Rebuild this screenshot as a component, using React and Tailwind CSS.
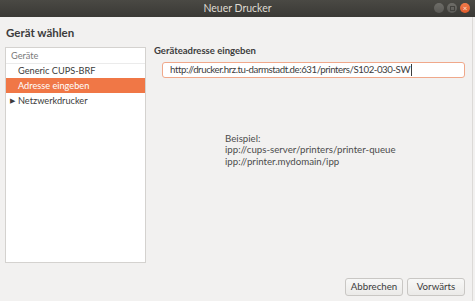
import React from "react";

export default function App() {
  return (
    <div
      className="w-[475px] h-[301px] bg-[#f2f1f0] flex flex-col overflow-hidden text-[#3c3c3c]"
      style={{ fontFamily: 'Lato, "Noto Sans", sans-serif' }}
    >
      {/* Title bar */}
      <div className="h-[17px] bg-gradient-to-b from-[#4a4944] to-[#3a3935] flex items-center relative shrink-0">
        <div className="flex-1 text-center text-[10.5px] text-[#dfdbd2] leading-none">Neuer Drucker</div>
        <div className="absolute right-[5px] top-[3px] flex gap-[3px]">
          <div className="w-[10px] h-[10px] rounded-full bg-gradient-to-b from-[#6e6d68] to-[#5a5955]" />
          <div className="w-[10px] h-[10px] rounded-full bg-gradient-to-b from-[#6e6d68] to-[#5a5955] flex items-center justify-center">
            <div className="w-[5px] h-[5px] border border-[#43423e]" />
          </div>
          <div className="w-[10px] h-[10px] rounded-full bg-gradient-to-b from-[#f37b4b] to-[#e05a2a] flex items-center justify-center text-[8px] leading-none text-[#fbe3d8]">×</div>
        </div>
      </div>

      <div className="flex-1 flex flex-col mr-[2px] border-r border-[#dcdad7]">
        <div className="px-[6px] pt-[10px] h-[30px] text-[11.5px] font-bold text-[#3c3c3c] leading-none">Gerät wählen</div>

        <div className="flex flex-1 px-[5px] gap-[8px]">
          {/* left list */}
          <div className="w-[141px] h-[216px] bg-white border border-[#d4d2cf] flex flex-col text-[9.2px] leading-none">
            <div className="h-[16px] flex items-center pl-[5px] text-[#7a7a7a] border-b border-[#ebebeb]">Geräte</div>
            <div className="h-[14px] flex items-center pl-[12px] text-[#3c3c3c]">Generic CUPS-BRF</div>
            <div className="h-[15px] flex items-center pl-[12px] bg-[#f07746] text-white">Adresse eingeben</div>
            <div className="h-[15px] flex items-center pl-[4px] text-[#3c3c3c]">
              <span className="text-[7px] mr-[3px]">▶</span>Netzwerkdrucker
            </div>
          </div>

          {/* right */}
          <div className="flex-1 flex flex-col">
            <div className="text-[9.5px] font-bold leading-none -mt-[1px]">Geräteadresse eingeben</div>
            <div className="ml-[8px] mt-[6px] w-[303px] h-[16px] border border-[#f0a88a] rounded-[3px] bg-white flex items-center pl-[7px] text-[9.7px] tracking-[-0.45px] text-[#3c3c3c] leading-none">
              <span>http://drucker.hrz.tu-darmstadt.de:631/printers/S102-030-SW</span>
              <span className="inline-block w-px h-[12px] bg-[#3c3c3c] ml-[1px]" />
            </div>
            <div className="ml-[71px] mt-[55px] text-[9.7px] leading-[11.5px] text-[#4c4c4c]">
              <div>Beispiel:</div>
              <div>ipp://cups-server/printers/printer-queue</div>
              <div>ipp://printer.mydomain/ipp</div>
            </div>
            <div className="flex-1" />
            <div className="flex justify-end gap-[4px] pr-[2px] pb-[5px]">
              <button className="w-[58px] h-[18px] border border-[#c9c7c4] rounded-[3px] bg-gradient-to-b from-[#f8f8f7] to-[#ebeae8] text-[9.7px] text-[#3c3c3c] leading-none">Abbrechen</button>
              <button className="w-[58px] h-[18px] border border-[#c9c7c4] rounded-[3px] bg-gradient-to-b from-[#f8f8f7] to-[#ebeae8] text-[9.7px] text-[#3c3c3c] leading-none">Vorwärts</button>
            </div>
          </div>
        </div>
      </div>
    </div>
  );
}
